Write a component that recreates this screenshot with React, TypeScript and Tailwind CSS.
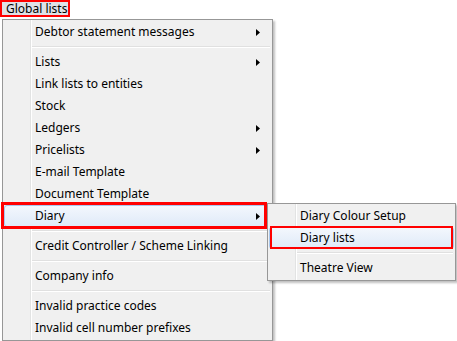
import React from 'react';

type Entry = { label?: string; sub?: boolean; sep?: boolean; hot?: boolean };

const mainItems: Entry[] = [
  { label: 'Debtor statement messages', sub: true },
  { sep: true },
  { label: 'Lists', sub: true },
  { label: 'Link lists to entities' },
  { label: 'Stock' },
  { label: 'Ledgers', sub: true },
  { label: 'Pricelists', sub: true },
  { label: 'E-mail Template' },
  { label: 'Document Template' },
  { label: 'Diary', sub: true, hot: true },
  { sep: true },
  { label: 'Credit Controller / Scheme Linking' },
  { sep: true },
  { label: 'Company info' },
  { sep: true },
  { label: 'Invalid practice codes' },
  { label: 'Invalid cell number prefixes' },
];

const diaryItems: Entry[] = [
  { label: 'Diary Colour Setup' },
  { label: 'Diary lists', hot: true },
  { sep: true },
  { label: 'Theatre View' },
];

const Arrow = () => (
  <svg width="4" height="7" viewBox="0 0 4 7" className="mr-[10px]">
    <path d="M0 0 L4 3.5 L0 7 Z" fill="#000" />
  </svg>
);

const MenuList = ({ items }: { items: Entry[] }) => (
  <div className="relative p-[1px]">
    {/* gutter line */}
    <div className="absolute left-[27px] top-0 bottom-0 w-[2px] border-l border-[#e2e3e3] border-r border-r-white" />
    {items.map((it, i) =>
      it.sep ? (
        <div key={i} className="h-[8px] flex items-center pl-[27px] pr-[1px]">
          <div className="w-full h-[2px] border-t border-[#e0e0e0] border-b border-b-white" />
        </div>
      ) : (
        <div
          key={i}
          className={
            'relative h-[22px] flex items-center justify-between pl-[30px] ' +
            (it.hot
              ? 'rounded-[3px] border border-[#a8c8ee] bg-gradient-to-b from-[#f3f7fd] to-[#dfeaf8]'
              : 'border border-transparent')
          }
        >
          <span className="whitespace-nowrap">{it.label}</span>
          {it.sub && <Arrow />}
        </div>
      )
    )}
  </div>
);

export default function App() {
  return (
    <div
      className="relative w-[457px] h-[341px] bg-white text-[12px] text-black overflow-hidden"
      style={{ fontFamily: '"Noto Sans", "Liberation Sans", sans-serif' }}
    >
      <div className="w-[70px] h-[17px] border-2 border-[#f00] bg-[#dfe1e6] flex items-center pl-[4px] leading-none whitespace-nowrap">
        Global lists
      </div>

      <div className="ml-[2px] mt-[2px] w-[271px] border border-[#979797] bg-[#f0f0f0] shadow-[2px_2px_2px_rgba(0,0,0,0.25)]">
        <MenuList items={mainItems} />
      </div>

      {/* red callout over Diary */}
      <div className="absolute left-[1px] top-[202px] w-[266px] h-[27px] border-[3px] border-[#f00]" />

      {/* Diary submenu */}
      <div className="absolute left-[267px] top-[203px] w-[189px] border border-[#979797] bg-[#f0f0f0] shadow-[2px_2px_2px_rgba(0,0,0,0.25)]">
        <MenuList items={diaryItems} />
      </div>

      {/* red callout over Diary lists */}
      <div className="absolute left-[270px] top-[226px] w-[183px] h-[23px] border-[2px] border-[#f00]" />
    </div>
  );
}
